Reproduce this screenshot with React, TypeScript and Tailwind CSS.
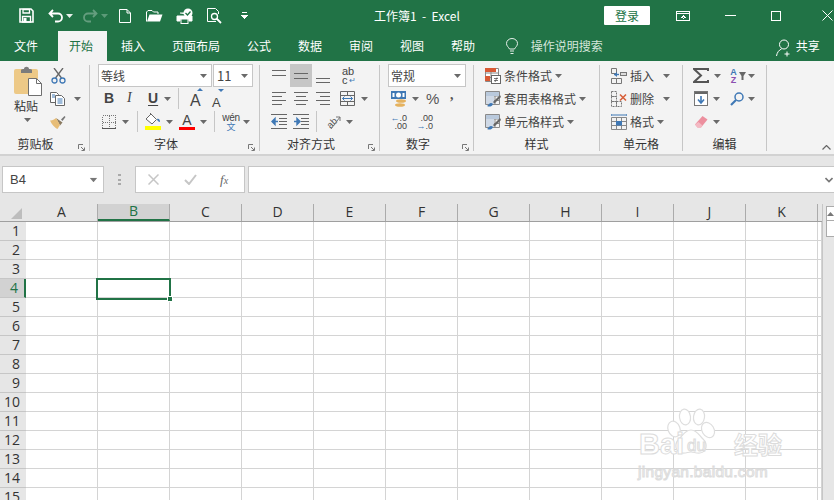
import type { ReactNode } from 'react'

const GREEN = '#217346'
const BLUE = '#3f78b5'
const GRAY = '#6a6a6a'

const columns = ['A', 'B', 'C', 'D', 'E', 'F', 'G', 'H', 'I', 'J', 'K']
const rows = Array.from({ length: 15 }, (_, i) => i + 1)
const tabs = ['插入', '页面布局', '公式', '数据', '审阅', '视图', '帮助']

function Caret({ className = '', color = GRAY }: { className?: string; color?: string }) {
  return (
    <svg width="7" height="4" viewBox="0 0 7 4" className={`shrink-0 ${className}`}>
      <path d="M0 0h7L3.5 4z" fill={color} />
    </svg>
  )
}

function Sep({ className = '' }: { className?: string }) {
  return <div className={`w-px h-[21px] shrink-0 bg-[#c6c6c6] ${className}`} />
}

function Row({ children }: { children: ReactNode }) {
  return <div className="h-[23px] flex items-center">{children}</div>
}

function Group({ className, label, launcher, labelClass = '', children }: { className: string; label: string; launcher?: boolean; labelClass?: string; children: ReactNode }) {
  return (
    <>
      <div className={`relative shrink-0 flex flex-col ${className}`}>
        <div className="h-[74px] pt-[3px]">{children}</div>
        <div className={`h-[18px] flex items-center justify-center text-xs text-[#333] ${labelClass}`}>{label}</div>
        {launcher && (
          <svg width="7" height="7" viewBox="0 0 7 7" className="absolute right-[4px] bottom-[3px]">
            <path d="M0.5 5V0.5H5M3 3l3 3M6.5 3.5v3h-3" fill="none" stroke="#777" />
          </svg>
        )}
      </div>
      <div className="w-px h-[86px] mt-[4px] shrink-0 bg-[#c6c6c6]" />
    </>
  )
}

function Lines({ ys, className = '' }: { ys: [number, number, number][]; className?: string }) {
  return (
    <svg width="15" height="17" viewBox="0 0 15 17" className={`shrink-0 ${className}`} shapeRendering="crispEdges">
      {ys.map(([y, a, b]) => (
        <rect key={y} x={a} y={y} width={b - a} height="1" fill="#666" />
      ))}
    </svg>
  )
}

function Indent({ flip, className = '' }: { flip?: boolean; className?: string }) {
  return (
    <svg width="16" height="15" viewBox="0 0 16 15" className={`shrink-0 ${className}`}>
      <path d="M0 .5h16M8 4.5h8M8 7.5h8M8 10.5h8M0 14.5h16" stroke="#666" />
      <path d={flip ? 'M1 7.5h4M4 4.5l3 3-3 3z' : 'M3 7.5h4M4 4.5l-3 3 3 3z'} stroke={BLUE} strokeWidth="1.4" fill={BLUE} />
    </svg>
  )
}

function StyleIcon({ className = '' }: { className?: string }) {
  return (
    <svg width="16" height="16" viewBox="0 0 16 16" className={`shrink-0 ${className}`}>
      <path d="M.5.5h14v13H.5zM5 .5v13M10 .5v13M.5 5h14M.5 9.500h14" fill="none" stroke="#8a8a8a" />
      <rect x="1" y="1" width="13" height="4" fill="#b9c9dc" />
      <rect x="1" y="5" width="8" height="8" fill="#cfd9e6" />
      <path d="M15 4L8 11l1.500 1.500L16 6z" fill="#666" />
      <path d="M2 15c2 1 5 1 6-2-1-1.500-3-1.500-4 0-.5.8-1 1.500-2 2z" fill={BLUE} />
    </svg>
  )
}

function Watermark() {
  return (
    <div className="absolute left-[638px] top-[408px] w-[150px] h-[76px] text-white [-webkit-text-stroke:1px_#dcdcdc] pointer-events-none">
      <svg width="50" height="48" viewBox="0 0 50 48" className="absolute left-[28px] top-0">
        <g fill="#fff" stroke="#dedede" strokeWidth="1.2">
          <ellipse cx="8" cy="21" rx="6" ry="8" transform="rotate(-20 8 21)" />
          <ellipse cx="19" cy="9" rx="5.500" ry="8" transform="rotate(-8 19 9)" />
          <ellipse cx="33" cy="9" rx="5.500" ry="8" transform="rotate(8 33 9)" />
          <ellipse cx="42" cy="22" rx="6" ry="8" transform="rotate(-30 42 22)" />
          <path d="M25 22c-6 0-8 5-12 9-5 5-4 13 3 14 4 .5 6-1 9-1s5 1.500 9 1c7-1 8-9 3-14-4-4-6-9-12-9z" />
        </g>
      </svg>
      <div className="absolute left-[1px] top-[21px] h-[30px] leading-[30px] text-[29px] font-bold [font-family:'Liberation_Sans',sans-serif]">Bai</div>
      <div className="absolute left-[49px] top-[28px] h-[20px] leading-[20px] text-[17px] [font-family:'Liberation_Sans',sans-serif]">du</div>
      <div className="absolute left-[96px] top-[21px] h-[30px] leading-[30px] text-[24px] font-bold">经验</div>
      <div className="absolute left-0 top-[54px] h-[20px] leading-[20px] text-[15.500px] tracking-[0.3px] [font-family:'Liberation_Sans',sans-serif]">jingyan.baidu.com</div>
    </div>
  )
}

export default function App() {
  return (
    <div className="relative w-[834px] h-[500px] overflow-hidden bg-white text-xs text-[#444] [font-family:'Noto_Sans_CJK_SC','Liberation_Sans',sans-serif]">
      {/* title bar */}
      <div className={`h-[31px] flex items-center bg-[#217346] text-white`}>
        <svg width="15" height="15" viewBox="0 0 15 15" className="ml-[19px] shrink-0">
          <path d="M1 1h11l2 2v11H1z" fill="none" stroke="#fff" strokeWidth="1.600" />
          <path d="M4 1.500h6.500v3.500H4zM3.500 8.500h8V14h-8z" fill="none" stroke="#fff" strokeWidth="1.300" />
          <rect x="4.500" y="10" width="3" height="4" fill="#fff" />
        </svg>
        <svg width="15" height="14" viewBox="0 0 15 14" className="ml-[14px] shrink-0">
          <path d="M5 1L1.500 4.500 5 8M2 4.500h8a4 4 0 0 1 0 8H7" fill="none" stroke="#fff" strokeWidth="1.800" />
        </svg>
        <Caret color="#e8f0eb" className="ml-[3px]" />
        <svg width="15" height="14" viewBox="0 0 15 14" className="ml-[10px] shrink-0 opacity-30">
          <path d="M10 1l3.500 3.500L10 8M13 4.500H5a4 4 0 0 0 0 8h3" fill="none" stroke="#fff" strokeWidth="1.800" />
        </svg>
        <Caret color="#5c9a78" className="ml-[3px]" />
        <svg width="12" height="14" viewBox="0 0 12 14" className="ml-[11px] shrink-0">
          <path d="M.5.500h7.500l3.500 3.500v9.500H.5zM8 .500V4h3.500" fill="none" stroke="#fff" />
        </svg>
        <svg width="17" height="13" viewBox="0 0 17 13" className="ml-[15px] shrink-0">
          <path d="M.5 12.500V3l1.500-1.500h4L7.500 3H12v2" fill="none" stroke="#fff" />
          <path d="M1 12.500L3.500 5.500H16.500L14 12.500z" fill="#fff" />
        </svg>
        <svg width="18" height="16" viewBox="0 0 18 16" className="ml-[13px] shrink-0">
          <path d="M4 5h9v3H1v5h3v-2h9v2h3V8h-1" fill="#fff" stroke="#fff" />
          <rect x="5" y="11" width="7" height="4.500" fill="#217346" stroke="#fff" />
          <circle cx="12" cy="5" r="4.500" fill="#fff" />
          <path d="M9.500 5l2 2 3-3.500" fill="none" stroke="#217346" strokeWidth="1.300" />
        </svg>
        <svg width="15" height="16" viewBox="0 0 15 16" className="ml-[13px] shrink-0">
          <path d="M9 13.500H.5V.5h8l3 3v2.500" fill="none" stroke="#fff" />
          <circle cx="7.500" cy="8.500" r="3" fill="none" stroke="#fff" strokeWidth="1.300" />
          <path d="M9.500 10.500l4.500 4.500" stroke="#fff" strokeWidth="1.800" />
        </svg>
        <svg width="7" height="7" viewBox="0 0 7 7" className="ml-[19px] shrink-0" shapeRendering="crispEdges">
          <rect x="1" y="0" width="5" height="1" fill="#fff" />
          <path d="M0 3h7L3.500 7z" fill="#fff" />
        </svg>
        <div className="ml-[126px] w-[94px] shrink-0 whitespace-pre text-xs">工作簿1  -  Excel</div>
        <div className="ml-[136px] w-[46px] h-[19px] shrink-0 flex items-center justify-center bg-white text-[#217346] rounded-[1px]">登录</div>
        <svg width="14" height="10" viewBox="0 0 14 10" className="ml-[26px] shrink-0" shapeRendering="crispEdges">
          <path d="M.5.500h13v9H.5zM.5 2.500h13" fill="none" stroke="#fff" />
          <path d="M7 4L4.500 6.500h5zM6.500 6h1v2h-1z" fill="#fff" />
        </svg>
        <div className="ml-[35px] w-[11px] h-px shrink-0 bg-white" />
        <div className="ml-[35px] w-[10px] h-[10px] shrink-0 border border-white" />
        <svg width="11" height="11" viewBox="0 0 11 11" className="ml-[41px] shrink-0">
          <path d="M.5.500l10 10M10.500.500l-10 10" stroke="#fff" />
        </svg>
      </div>

      {/* tabs */}
      <div className="h-[30px] flex bg-[#217346] text-white">
        <div className="pl-[14px] pr-[20px] flex items-center">文件</div>
        <div className="w-[49px] pl-[11px] flex items-center bg-[#f3f3f3] text-[#217346]">开始</div>
        <div className="pl-[0.500px] flex">
          {tabs.map((t) => (
            <div key={t} className="px-[13.500px] flex items-center">{t}</div>
          ))}
        </div>
        <svg width="12" height="17" viewBox="0 0 12 17" className="ml-[17px] mt-[7px] shrink-0">
          <path d="M3.500 11C2.500 9 .5 8 .5 5.500a5.500 5 0 0 1 11 0C11.500 8 9.500 9 8.500 11zM4 13h4M4.500 15.500h3" fill="none" stroke="#e6efe9" />
        </svg>
        <div className="ml-[13px] flex items-center text-[#d5e5db]">操作说明搜索</div>
        <svg width="18" height="18" viewBox="0 0 18 18" className="ml-[173px] mt-[8px] shrink-0">
          <circle cx="8" cy="5.500" r="4.500" fill="none" stroke="#fff" />
          <path d="M.5 17c.5-3.500 2.500-6 5-7M11 12.500v5M8.500 15h5" fill="none" stroke="#fff" />
        </svg>
        <div className="ml-[2px] flex items-center">共享</div>
      </div>

      {/* ribbon */}
      <div className="relative h-[95px] flex bg-[#f3f3f3] border-b-2 border-[#d2d2d2]">
        <Group className="w-[89px]" label="剪贴板" launcher labelClass="pr-[18px]">
          <div className="flex">
            <div className="w-[50px] pl-[14px] flex flex-col">
              <svg width="28" height="30" viewBox="0 0 28 30" className="mt-[2px]">
                <rect x="0" y="3" width="24" height="25" rx="2" fill="#edc987" />
                <path d="M7 4c0-1 2-1 3-1 0-3 5-3 5 0 1 0 3 0 3 1v3H7z" fill="#7c7c7c" />
                <path d="M14.500 12.500h8l5 5v12h-13z" fill="#fff" stroke="#6f6f6f" />
                <path d="M22.500 12.500v5h5" fill="none" stroke="#6f6f6f" />
              </svg>
              <div className="mt-[3px] leading-[14px] text-[#333]">粘贴</div>
              <Caret className="mt-[5px] ml-[10px]" />
            </div>
            <div className="w-[39px] flex flex-col">
              <Row>
                <svg width="15" height="16" viewBox="0 0 15 16" className="ml-[1px]">
                  <path d="M3 0l7.500 10M12 0L4.500 10" stroke="#666" strokeWidth="1.300" />
                  <circle cx="3.500" cy="12.500" r="2.500" fill="none" stroke={BLUE} strokeWidth="1.300" />
                  <circle cx="11.500" cy="12.500" r="2.500" fill="none" stroke={BLUE} strokeWidth="1.300" />
                </svg>
              </Row>
              <Row>
                <svg width="16" height="14" viewBox="0 0 16 14">
                  <path d="M.5.500h6l2 2v8H.5z" fill="#fff" stroke="#666" />
                  <path d="M5.500 3.500h6l3 3v7h-9z" fill="#fff" stroke="#666" />
                  <path d="M2 3h3M2 5h3M7.500 7h5M7.500 9h5M7.500 11h5" stroke={BLUE} />
                </svg>
                <Caret className="ml-[8px]" />
              </Row>
              <Row>
                <svg width="16" height="14" viewBox="0 0 16 14">
                  <path d="M11 4.500l3.500-3.500 1 1-3 4z" fill="#777" />
                  <path d="M6 3l6.500 4.500-2.500 3z" fill="#8a7a60" />
                  <path d="M0 5.500c2 .5 4-1 6-2.500l4 7-2.500 4C5 13 1.500 9 0 5.500z" fill="#e7bd77" />
                </svg>
              </Row>
            </div>
          </div>
        </Group>

        <Group className="w-[169px]" label="字体" launcher labelClass="pr-[17px]">
          <Row>
            <div className="ml-[8px] w-[114px] h-[23px] pl-[2px] pr-[4px] flex items-center justify-between bg-white border border-[#c6c6c6]">
              <span>等线</span>
              <Caret />
            </div>
            <div className="ml-px w-[40px] h-[23px] pl-[3px] pr-[4px] flex items-center justify-between bg-white border border-[#c6c6c6] text-[13px]">
              <span>11</span>
              <Caret />
            </div>
          </Row>
          <Row>
            <span className="ml-[14px] w-[8px] text-[14px] font-bold [font-family:'Liberation_Sans',sans-serif]">B</span>
            <span className="ml-[15px] w-[8px] text-[14px] italic [font-family:'Liberation_Serif',serif]">I</span>
            <span className="ml-[13px] w-[10px] text-[14px] font-bold underline underline-offset-2 [font-family:'Liberation_Sans',sans-serif]">U</span>
            <Caret className="ml-[6px]" />
            <Sep className="ml-[7px]" />
            <span className="relative ml-[11px] w-[11px] text-[16px] leading-[16px] mt-[4px] [font-family:'Liberation_Sans',sans-serif]">
              A
              <svg width="6" height="3" viewBox="0 0 6 3" className="absolute left-[7px] top-[-5px]"><path d="M3 0l3 3H0z" fill={BLUE} /></svg>
            </span>
            <span className="relative ml-[11px] w-[9px] text-[13px] leading-[13px] mt-[7px] [font-family:'Liberation_Sans',sans-serif]">
              A
              <svg width="6" height="3" viewBox="0 0 6 3" className="absolute left-[6px] top-[-7px]"><path d="M0 0h6L3 3z" fill={BLUE} /></svg>
            </span>
          </Row>
          <Row>
            <svg width="14" height="14" viewBox="0 0 14 14" className="ml-[12px] shrink-0" shapeRendering="crispEdges">
              <path d="M.5.500h13v13H.5zM7 .500v13M.5 7h13" fill="none" stroke="#777" strokeDasharray="1 1" />
              <path d="M0 13.500h14" stroke="#555" />
            </svg>
            <Caret className="ml-[6px]" />
            <Sep className="ml-[8px]" />
            <div className="ml-[7px] w-[16px] flex flex-col shrink-0">
              <svg width="16" height="13" viewBox="0 0 16 13">
                <path d="M1 6l5-5 5.500 5.500L7 11z" fill="#fff" stroke="#666" />
                <path d="M12 6c2-1 3 1 3 3-1 0-3-1-3-3z" fill={BLUE} />
                <path d="M6 1l-1-1" stroke="#666" />
              </svg>
              <div className="h-[4px] bg-[#ffff00]" />
            </div>
            <Caret className="ml-[5px]" />
            <div className="ml-[6px] w-[16px] flex flex-col items-center shrink-0">
              <span className="h-[13px] text-[14px] leading-[14px] [font-family:'Liberation_Sans',sans-serif]">A</span>
              <div className="mt-[1px] w-[16px] h-[3px] bg-[#ff0000]" />
            </div>
            <Caret className="ml-[5px]" />
            <Sep className="ml-[7px]" />
            <div className="ml-[8px] w-[16px] flex flex-col items-center shrink-0 leading-[9px]">
              <span className="text-[10px] [font-family:'Liberation_Sans',sans-serif] tracking-[-0.3px]">wén</span>
              <span className="text-[9px] text-[#3f78b5]">文</span>
            </div>
            <Caret className="ml-[4px]" />
          </Row>
        </Group>

        <Group className="w-[119px]" label="对齐方式" launcher labelClass="pr-[17px]">
          <Row>
            <Lines className="ml-[12px]" ys={[[3, 0, 14], [8, 0, 14]]} />
            <div className="ml-[3px] w-[22px] h-[23px] flex items-center justify-center bg-[#c6c6c6]">
              <Lines className="ml-[1px]" ys={[[6, 0, 14], [11, 0, 14]]} />
            </div>
            <Lines className="ml-[4px]" ys={[[11, 0, 14], [15, 0, 14]]} />
            <div className="ml-[11px] w-[16px] flex flex-col text-[11px] leading-[9px] [font-family:'Liberation_Sans',sans-serif]">
              <span>ab</span>
              <span className="flex items-center">c<span className="ml-[1px] text-[8px] text-[#3f78b5]">↵</span></span>
            </div>
          </Row>
          <Row>
            <Lines className="ml-[12px]" ys={[[2, 0, 14], [6, 0, 10], [10, 0, 14], [14, 0, 10]]} />
            <Lines className="ml-[7px]" ys={[[2, 0, 14], [6, 2, 12], [10, 0, 14], [14, 2, 12]]} />
            <Lines className="ml-[7px]" ys={[[2, 0, 14], [6, 4, 14], [10, 0, 14], [14, 4, 14]]} />
            <svg width="15" height="15" viewBox="0 0 15 15" className="ml-[9px] shrink-0">
              <path d="M.5.500h14v14H.5zM.5 4.500h14M.5 10.500h14M7.500.500v4M7.500 10.500v4" fill="none" stroke="#666" />
              <path d="M2.500 7.500h10M4.500 5.500l-2 2 2 2M10.500 5.500l2 2-2 2" fill="none" stroke={BLUE} />
            </svg>
            <Caret className="ml-[6px]" />
          </Row>
          <Row>
            <Indent className="ml-[11px]" />
            <Indent flip className="ml-[6px]" />
            <Sep className="ml-[7px]" />
            <svg width="16" height="16" viewBox="0 0 16 16" className="ml-[8px] shrink-0">
              <text x="1" y="12" fontSize="9.500" fill="#555" transform="rotate(-45 7 8)" fontFamily="'Liberation Sans', sans-serif">ab</text>
              <path d="M6 15L15 3M11 3h4v4" fill="none" stroke="#777" />
            </svg>
            <Caret className="ml-[5px]" />
          </Row>
        </Group>

        <Group className="w-[93px]" label="数字" launcher labelClass="pr-[17px]">
          <Row>
            <div className="ml-[8px] w-[78px] h-[23px] pl-[2px] pr-[4px] flex items-center justify-between bg-white border border-[#c6c6c6]">
              <span>常规</span>
              <Caret />
            </div>
          </Row>
          <Row>
            <svg width="16" height="17" viewBox="0 0 16 17" className="ml-[11px] shrink-0">
              <rect x="0" y="1" width="15" height="8" fill={BLUE} />
              <circle cx="7.500" cy="5" r="2.500" fill="#fff" />
              <rect x="1.500" y="3" width="2" height="4" fill="#fff" />
              <rect x="11.500" y="3" width="2" height="4" fill="#fff" />
              <ellipse cx="10" cy="11" rx="5" ry="1.800" fill="#e5b25f" />
              <ellipse cx="9" cy="15" rx="5" ry="1.800" fill="#e5b25f" />
            </svg>
            <Caret className="ml-[5px]" />
            <span className="ml-[7px] w-[15px] text-[15px] [font-family:'Liberation_Sans',sans-serif] text-[#555]">%</span>
            <span className="ml-[9px] text-[14px] font-bold [font-family:'Liberation_Serif',serif] text-[#555] -mt-[6px]">,</span>
          </Row>
          <Row>
            <div className="ml-[11px] w-[16px] flex flex-col items-end text-[9px] leading-[8px] [font-family:'Liberation_Sans',sans-serif]">
              <span><span className="text-[#3f78b5]">←</span>.0</span>
              <span>.00</span>
            </div>
            <div className="ml-[9px] w-[17px] flex flex-col items-end text-[9px] leading-[8px] [font-family:'Liberation_Sans',sans-serif]">
              <span>.00</span>
              <span><span className="text-[#3f78b5]">→</span>.0</span>
            </div>
          </Row>
        </Group>

        <Group className="w-[125px]" label="样式">
          <Row>
            <svg width="16" height="16" viewBox="0 0 16 16" className="ml-[11px] shrink-0">
              <path d="M.5.500h13v13H.5zM6 .500v13M.5 5h13M.5 9.500h13" fill="#fff" stroke="#888" />
              <rect x="0" y="0" width="11" height="4" fill="#d85a35" />
              <rect x="0" y="8" width="5" height="5" fill="#d85a35" />
              <rect x="6.500" y="7.500" width="9" height="8" fill="#fff" stroke="#666" />
              <path d="M9 10.500h4M9 12.500h4M12 9.500l-2 4.500" stroke="#555" strokeWidth=".8" />
            </svg>
            <span className="ml-[3px]">条件格式</span>
            <Caret className="ml-[3px]" />
          </Row>
          <Row>
            <StyleIcon className="ml-[11px]" />
            <span className="ml-[3px]">套用表格格式</span>
            <Caret className="ml-[3px]" />
          </Row>
          <Row>
            <StyleIcon className="ml-[11px]" />
            <span className="ml-[3px]">单元格样式</span>
            <Caret className="ml-[3px]" />
          </Row>
        </Group>

        <Group className="w-[82px]" label="单元格">
          <Row>
            <svg width="16" height="16" viewBox="0 0 16 16" className="ml-[11px] shrink-0">
              <path d="M.5.500h5v5h-5zM.5 10.500h5v5h-5zM5.500 10.500h5v5h-5z" fill="none" stroke="#777" />
              <rect x="9.500" y="4.500" width="6" height="3" fill="#ddd" stroke="#777" />
              <path d="M3 6.500h5" stroke={BLUE} strokeWidth="1.400" />
              <path d="M6 4l-3 2.500L6 9z" fill={BLUE} />
            </svg>
            <span className="ml-[3px]">插入</span>
            <Caret className="ml-[9px]" />
          </Row>
          <Row>
            <svg width="16" height="16" viewBox="0 0 16 16" className="ml-[11px] shrink-0">
              <path d="M.5.500h5v5h-5zM.5 10.500h5v5h-5zM5.500 10.500h5v5h-5zM.5 5.500h5v5h-5z" fill="none" stroke="#777" strokeDasharray="2 1" />
              <path d="M9 3.500l6 6M15 3.500l-6 6" stroke="#d8603a" strokeWidth="1.600" />
            </svg>
            <span className="ml-[3px]">删除</span>
            <Caret className="ml-[9px]" />
          </Row>
          <Row>
            <svg width="16" height="16" viewBox="0 0 16 16" className="ml-[11px] shrink-0">
              <path d="M.5 3.500h15v12H.5zM5.500 3.500v12M10.500 3.500v12M.5 7.500h15M.5 11.500h15" fill="none" stroke="#888" />
              <rect x="5" y="7" width="6" height="4.500" fill={BLUE} />
              <path d="M0 1h16M0 0v2M16 0v2" stroke={BLUE} />
            </svg>
            <span className="ml-[3px]">格式</span>
            <Caret className="ml-[3px]" />
          </Row>
        </Group>

        <Group className="w-[83px]" label="编辑">
          <Row>
            <svg width="16" height="15" viewBox="0 0 16 15" className="ml-[10px] shrink-0">
              <path d="M15 3V1H1l7 6.500L1 14h14v-2" fill="none" stroke="#555" strokeWidth="2" />
            </svg>
            <Caret className="ml-[5px]" />
            <div className="ml-[8px] w-[9px] flex flex-col items-center text-[9px] leading-[8px] font-bold [font-family:'Liberation_Sans',sans-serif]">
              <span className="text-[#3f78b5]">A</span>
              <span className="text-[#8b4fb0]">Z</span>
            </div>
            <svg width="7" height="8" viewBox="0 0 7 8" className="ml-[1px] shrink-0">
              <path d="M0 0h7L4.500 4v4h-2V4z" fill="#666" />
            </svg>
            <Caret className="ml-[2px]" />
          </Row>
          <Row>
            <svg width="14" height="15" viewBox="0 0 14 15" className="ml-[11px] shrink-0" shapeRendering="crispEdges">
              <rect x=".5" y=".5" width="13" height="14" fill="#fff" stroke="#777" />
              <rect x="1" y="1" width="12" height="2" fill="#666" />
              <path d="M7 5v7M4 8.500l3 3.500 3-3.500" fill="none" stroke={BLUE} strokeWidth="1.600" shapeRendering="auto" />
            </svg>
            <Caret className="ml-[5px]" />
            <svg width="14" height="14" viewBox="0 0 14 14" className="ml-[10px] shrink-0">
              <circle cx="9" cy="5" r="4" fill="none" stroke={BLUE} strokeWidth="1.500" />
              <path d="M6 8l-5 5" stroke={BLUE} strokeWidth="2.200" />
            </svg>
            <Caret className="ml-[4px]" />
          </Row>
          <Row>
            <svg width="14" height="13" viewBox="0 0 14 13" className="ml-[11px] shrink-0">
              <path d="M8.500 1L13.500 4.500 7 12.500H3.500L1 9.500z" fill="#ec8f9e" />
              <path d="M1 9.500l2.500 3H7l1.500-2-4-3.500z" fill="#f4b9c3" />
            </svg>
            <Caret className="ml-[5px]" />
          </Row>
        </Group>

        <svg width="9" height="5" viewBox="0 0 9 5" className="absolute right-[3px] bottom-[4px]">
          <path d="M.5 4.500l4-4 4 4" fill="none" stroke="#666" strokeWidth="1.200" />
        </svg>
      </div>

      {/* formula bar */}
      <div className="h-[48px] pt-[10px] flex bg-[#e6e6e6]">
        <div className="ml-[2px] w-[102px] h-[27px] pl-[7px] pr-[6px] flex items-center justify-between bg-white border border-[#c6c6c6] text-[13px] [font-family:'Liberation_Sans',sans-serif]">
          <span>B4</span>
          <Caret color="#777" className="scale-110" />
        </div>
        <div className="ml-[14px] w-[3px] h-[11px] mt-[8px] flex flex-col justify-between">
          <div className="h-[2px] bg-[#aaa]" />
          <div className="h-[2px] bg-[#aaa]" />
          <div className="h-[2px] bg-[#aaa]" />
        </div>
        <div className="ml-[14px] w-[110px] h-[27px] flex items-center bg-white border border-[#c6c6c6]">
          <svg width="11" height="11" viewBox="0 0 11 11" className="ml-[12px] shrink-0">
            <path d="M.5.500l10 10M10.500.500l-10 10" stroke="#c6c6c6" strokeWidth="1.500" />
          </svg>
          <svg width="13" height="11" viewBox="0 0 13 11" className="ml-[25px] shrink-0">
            <path d="M1 6l4 4 7-9" fill="none" stroke="#c6c6c6" strokeWidth="2" />
          </svg>
          <span className="ml-[23px] italic text-[13px] text-[#666] [font-family:'Liberation_Serif',serif]">f<span className="text-[10px]">x</span></span>
        </div>
        <div className="ml-[3px] flex-1 h-[27px] pr-[1px] flex items-center justify-end bg-white border-y border-l border-[#c6c6c6]">
          <svg width="8" height="6" viewBox="0 0 8 6">
            <path d="M.5 1L4 4.500 7.500 1" fill="none" stroke="#777" strokeWidth="1.600" />
          </svg>
        </div>
      </div>

      {/* sheet */}
      <div className="flex h-[296px] overflow-hidden bg-[#e6e6e6]">
        <div className="w-[822px] shrink-0">
          <div className="h-[18px] flex border-b border-[#9f9f9f] text-[14px] text-[#333] [font-family:'Open_Sans',sans-serif]">
            <div className="w-[26px] shrink-0 pl-[11px] pt-[4px]">
              <svg width="11" height="11" viewBox="0 0 11 11" className="block"><path d="M11 0v11H0z" fill="#bdbdbd" /></svg>
            </div>
            {columns.map((c) => (
              <div
                key={c}
                className={`w-[72px] shrink-0 flex items-center justify-center border-r border-[#ababab] ${c === 'B' ? 'bg-[#d2d2d2] text-[#217346] border-b-2 border-b-[#217346]' : ''}`}
              >
                {c}
              </div>
            ))}
          </div>
          {rows.map((r) => (
            <div key={r} className="h-[19px] flex">
              <div className={`w-[26px] shrink-0 pr-[6px] flex items-center justify-end border-b border-[#c6c6c6] text-[14px] [font-family:'Open_Sans',sans-serif] ${r === 4 ? 'bg-[#d2d2d2] text-[#217346] border-r-2 border-r-[#217346]' : 'text-[#333]'}`}>
                {r}
              </div>
              <div className="flex-1 flex bg-white">
                {columns.map((c) => (
                  <div key={c} className="w-[72px] shrink-0 border-r border-b border-[#d4d4d4]" />
                ))}
                <div className="flex-1 border-b border-r border-[#d4d4d4]" />
              </div>
            </div>
          ))}
        </div>
        <div className="flex-1 pl-[3px] pt-[2px] flex flex-col border-l border-[#c6c6c6]">
          <div className="h-[15px] flex items-center justify-center bg-white border border-[#ababab]">
            <svg width="7" height="4" viewBox="0 0 7 4"><path d="M3.500 0L7 4H0z" fill="#777" /></svg>
          </div>
          <div className="h-[16px] bg-white border-x border-b border-[#ababab]" />
        </div>
      </div>

      {/* active cell */}
      <div className="absolute left-[96px] top-[278px] w-[75px] h-[22px] border-2 border-[#217346]">
        <div className="absolute right-[-4px] bottom-[-4px] w-[6px] h-[6px] bg-[#217346] border border-white" />
      </div>

      <Watermark />
    </div>
  )
}
